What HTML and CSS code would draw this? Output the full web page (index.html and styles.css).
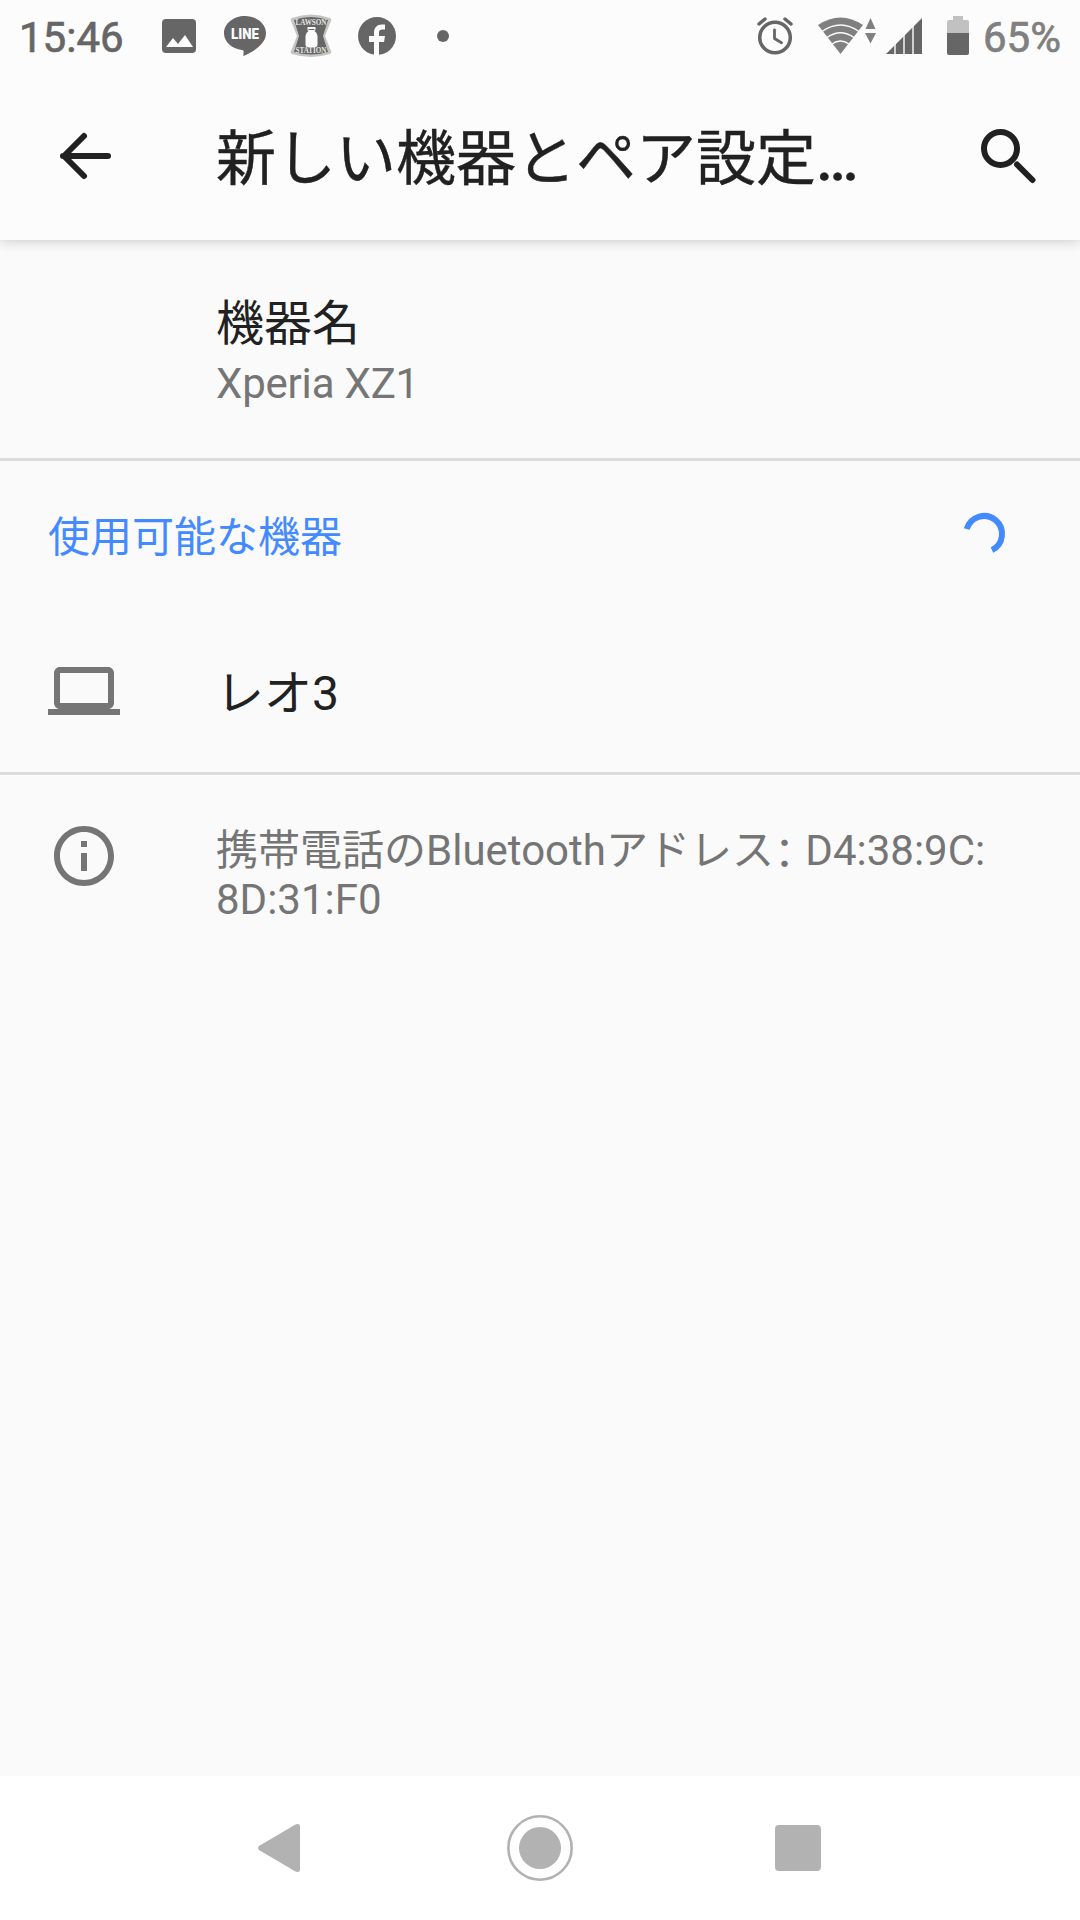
FILE: index.html
```html
<!DOCTYPE html>
<html lang="ja">
<head>
    <meta charset="UTF-8">
    <meta name="viewport" content="width=device-width, initial-scale=1.0">
    <title>新しい機器とペア設定する</title>
    <link rel="stylesheet" href="styles.css">
</head>
<body>
    <div class="screen">
        <div class="status-bar">
            <span class="clock">15:46</span>
            <svg class="icon-photo" width="34" height="34" viewBox="0 0 34 34">
                <rect width="34" height="34" rx="4" fill="#666"/>
                <path d="M4 28l7-9 5 6 7-9 8 12z" fill="#fcfcfc"/>
            </svg>
            <svg class="icon-line" width="42" height="40" viewBox="0 0 42 40">
                <path d="M21 0C9.400 0 0 7.600 0 17.200c0 8.600 7.600 15.400 18 16.800 1.400.3 1.800 1 1.600 2.200l-.3 3.800C26 37.500 42 29 42 17.200 42 7.600 32.600 0 21 0z" fill="#666"/>
                <text x="21" y="23" text-anchor="middle" textLength="28" lengthAdjust="spacingAndGlyphs" class="line-text">LINE</text>
            </svg>
            <svg class="icon-lawson" width="42" height="44" viewBox="0 0 42 44">
                <path d="M2 4Q21-3 40 4q2 1 1 3l-6 15 6 15q1 2-1 3-19 6-38 0-2-1-1-3L7 22 1 7Q0 5 2 4z" fill="#c4c4c4"/>
                <path d="M4 6Q21 0 38 6l-5 16 5 16q-17 5-34 0l5-16z" fill="#666"/>
                <text x="21" y="11" text-anchor="middle" textLength="31" lengthAdjust="spacingAndGlyphs" class="sign-text">LAWSON</text>
                <text x="21" y="39" text-anchor="middle" textLength="31" lengthAdjust="spacingAndGlyphs" class="sign-text">STATION</text>
                <path d="M17.500 13h8v3l-1 1q3 2 3 5v9q0 2-2 2h-8q-2 0-2-2v-9q0-3 3-5l-1-1z" fill="#fcfcfc"/>
                <path d="M18.500 15.500h6" stroke="#666" stroke-width="1"/>
            </svg>
            <svg class="icon-fb" width="38" height="38" viewBox="0 0 38 38">
                <circle cx="19" cy="19" r="19" fill="#666"/>
                <path d="M16 38V25h-5v-6h5v-3c0-5.500 3-8.500 8-8.500h3v5h-2.500c-2.500 0-3.500 1-3.500 3V19h6l-1 6h-5v13z" fill="#fcfcfc"/>
            </svg>
            <span class="more-dot"></span>
            <svg class="icon-alarm" width="36" height="38" viewBox="0 0 36 38">
                <g fill="none" stroke="#666" stroke-width="3.500" stroke-linecap="round">
                    <circle cx="18" cy="20.500" r="15.300"/>
                    <path d="M2 7l6-5M34 7l-6-5"/>
                    <path d="M17.500 13v8.500l7 4.300" stroke-width="2.800" stroke-linejoin="round"/>
                </g>
            </svg>
            <svg class="icon-wifi" width="59" height="38" viewBox="0 0 59 38">
                <path d="M0 8Q22.500-7 45 8L22.500 37z" fill="#808080"/>
                <g fill="none" stroke="#fcfcfc" stroke-width="1.500">
                    <path d="M4 14.500q18.500-13 37 0"/>
                    <path d="M9 20.500q13.500-9.500 27 0"/>
                    <path d="M14 27q8.500-6 17 0"/>
                </g>
                <path d="M52.500 1l5 11h-10zM47 16h11l-5.500 10.500z" fill="#808080"/>
            </svg>
            <svg class="icon-signal" width="37" height="37" viewBox="0 0 37 37">
                <path d="M0 36L36 0v36z" fill="#666"/>
                <path d="M9 0v37M18 0v37M27 0v37" stroke="#fcfcfc" stroke-width="1.400"/>
            </svg>
            <svg class="icon-battery" width="22" height="39" viewBox="0 0 22 39">
                <path d="M6 0h10v4h4q2 0 2 2v12H0V6q0-2 2-2h4z" fill="#c1c1c1"/>
                <path d="M0 17h22v20q0 2-2 2H2q-2 0-2-2z" fill="#666"/>
            </svg>
            <span class="battery-level">65%</span>
        </div>

        <div class="app-bar">
            <svg class="icon-back" width="72" height="72" viewBox="0 0 72 72">
                <path d="M60 36H15M36 16L16 36l20 20" fill="none" stroke="#212121" stroke-width="6" stroke-linecap="round" stroke-linejoin="round"/>
            </svg>
            <h1>新しい機器とペア設定<span class="ellipsis">…</span></h1>
            <svg class="icon-search" width="72" height="72" viewBox="0 0 72 72">
                <g fill="none" stroke="#212121" stroke-width="6">
                    <circle cx="28.500" cy="28.500" r="16.500"/>
                    <path d="M45 44.500l15.500 15.500" stroke-linecap="round"/>
                </g>
            </svg>
        </div>

        <div class="content">
            <div class="row device-name">
                <div class="title">機器名</div>
                <div class="summary">Xperia XZ1</div>
            </div>
            <div class="category">
                <span>使用可能な機器</span>
                <svg width="48" height="48" viewBox="0 0 48 48">
                    <path d="M6.700 19A18 18 0 1 1 32 40.100" fill="none" stroke="#448aff" stroke-width="6"/>
                </svg>
            </div>
            <div class="row device">
                <svg width="72" height="72" viewBox="0 0 24 24">
                    <path d="M20 18c1.100 0 2-.9 2-2V6c0-1.100-.9-2-2-2H4c-1.100 0-2 .9-2 2v10c0 1.100.9 2 2 2H0v2h24v-2h-4zM4 6h16v10H4V6z" fill="#757575"/>
                </svg>
                <div class="title">レオ3</div>
            </div>
            <div class="footer">
                <svg width="72" height="72" viewBox="0 0 24 24">
                    <path d="M11 17h2v-6h-2v6zm1-15C6.480 2 2 6.480 2 12s4.480 10 10 10 10-4.480 10-10S17.520 2 12 2zm0 18c-4.410 0-8-3.590-8-8s3.590-8 8-8 8 3.590 8 8-3.590 8-8 8zM11 9h2V7h-2v2z" fill="#757575"/>
                </svg>
                <p>携帯電話のBluetoothアドレス<span class="colon">：</span> D4:38:9C:<br>8D:31:F0</p>
            </div>
        </div>

        <div class="nav-bar">
            <svg width="42" height="48" viewBox="0 0 42 48">
                <path d="M1 22L37 .8Q42-1.500 42 3v42q0 4.500-5 2.200L1 26q-2-2 0-4z" fill="#b2b2b2"/>
            </svg>
            <svg class="home" width="66" height="66" viewBox="0 0 66 66">
                <circle cx="33" cy="33" r="31.700" fill="none" stroke="#b2b2b2" stroke-width="2.600"/>
                <circle cx="33" cy="33" r="21" fill="#b2b2b2"/>
            </svg>
            <span class="recents"></span>
        </div>
    </div>
</body>
</html>
```
FILE: styles.css
```css
body {
    font-family: Roboto, "Noto Sans CJK JP", sans-serif;
    background-color: #fafafa;
    color: #212121;
    margin: 0;
}

svg {
    display: block;
    flex-shrink: 0;
}

.screen {
    display: flex;
    flex-direction: column;
    width: 1080px;
    height: 1920px;
    overflow: hidden;
}

.status-bar {
    display: flex;
    align-items: flex-start;
    box-sizing: border-box;
    height: 72px;
    padding-left: 19px;
    background: #fcfcfc;
    color: #666;
    font-size: 42px;
    line-height: 48px;
    -webkit-text-stroke: 0.7px;
    z-index: 2;
}

.clock {
    width: 143px;
    margin-top: 14px;
}

.icon-photo {
    margin-top: 19px;
}

.icon-line {
    margin: 16px 0 0 28px;
}

.line-text {
    font-size: 14px;
    font-weight: 900;
    fill: #fcfcfc;
    -webkit-text-stroke: 0;
}

.icon-lawson {
    margin: 14px 0 0 24px;
}

.sign-text {
    font-family: "Liberation Serif", serif;
    font-size: 8px;
    font-weight: bold;
    fill: #e4e4e4;
    -webkit-text-stroke: 0;
}

.icon-fb {
    margin: 17px 0 0 26px;
}

.more-dot {
    width: 12px;
    height: 12px;
    margin: 30px 0 0 41px;
    border-radius: 50%;
    background: #666;
}

.icon-alarm {
    margin: 17px 0 0 auto;
}

.icon-wifi {
    margin: 17px 0 0 25px;
}

.icon-signal {
    margin: 18px 0 0 9px;
}

.icon-battery {
    margin: 16px 0 0 24px;
}

.battery-level {
    width: 97px;
    margin: 14px 0 0 14px;
    color: #808080;
}

.app-bar {
    display: flex;
    align-items: center;
    height: 168px;
    padding: 0 36px 0 48px;
    background: #fcfcfc;
    box-shadow: 0 1px 12px rgba(0, 0, 0, 0.2);
    z-index: 1;
}

h1 {
    flex: 1;
    margin: 7px 0 0 96px;
    font-size: 60px;
    font-weight: 400;
    line-height: 72px;
    white-space: nowrap;
    -webkit-text-stroke: 0.4px;
}

.ellipsis {
    font-weight: 500;
}

.content {
    flex: 1;
}

.row {
    box-sizing: border-box;
    border-bottom: 3px solid #dcdcdc;
}

.title {
    font-size: 48px;
    line-height: 60px;
}

.summary {
    color: #757575;
    font-size: 42px;
    line-height: 50px;
}

.device-name {
    height: 221px;
    padding: 54px 0 0 216px;
}

.device-name .summary {
    margin-top: 5px;
    letter-spacing: -0.2px;
}

.category {
    display: flex;
    align-items: center;
    justify-content: space-between;
    height: 146px;
    padding: 0 72px 0 48px;
    color: #448aff;
    font-size: 42px;
    line-height: 50px;
}

.category span {
    margin-top: 8px;
}

.device {
    display: flex;
    align-items: center;
    gap: 96px;
    height: 168px;
    padding: 3px 48px 0;
}

.device .title {
    margin-top: 5px;
}

.footer {
    display: flex;
    align-items: flex-start;
    gap: 96px;
    padding: 45px 48px 0;
    color: #757575;
}

.footer p {
    margin: 6px 0 0;
    font-size: 42px;
    line-height: 49px;
    white-space: nowrap;
}

.colon {
    font-family: "Noto Sans CJK JP", sans-serif;
    font-feature-settings: "halt";
    line-height: 1;
    vertical-align: -4px;
}

.nav-bar {
    display: flex;
    align-items: center;
    height: 144px;
    padding: 0 259px 0 258px;
    background: #fff;
}

.home {
    margin: 0 auto 0 207px;
}

.recents {
    width: 46px;
    height: 46px;
    border-radius: 4px;
    background: #b2b2b2;
}
```
